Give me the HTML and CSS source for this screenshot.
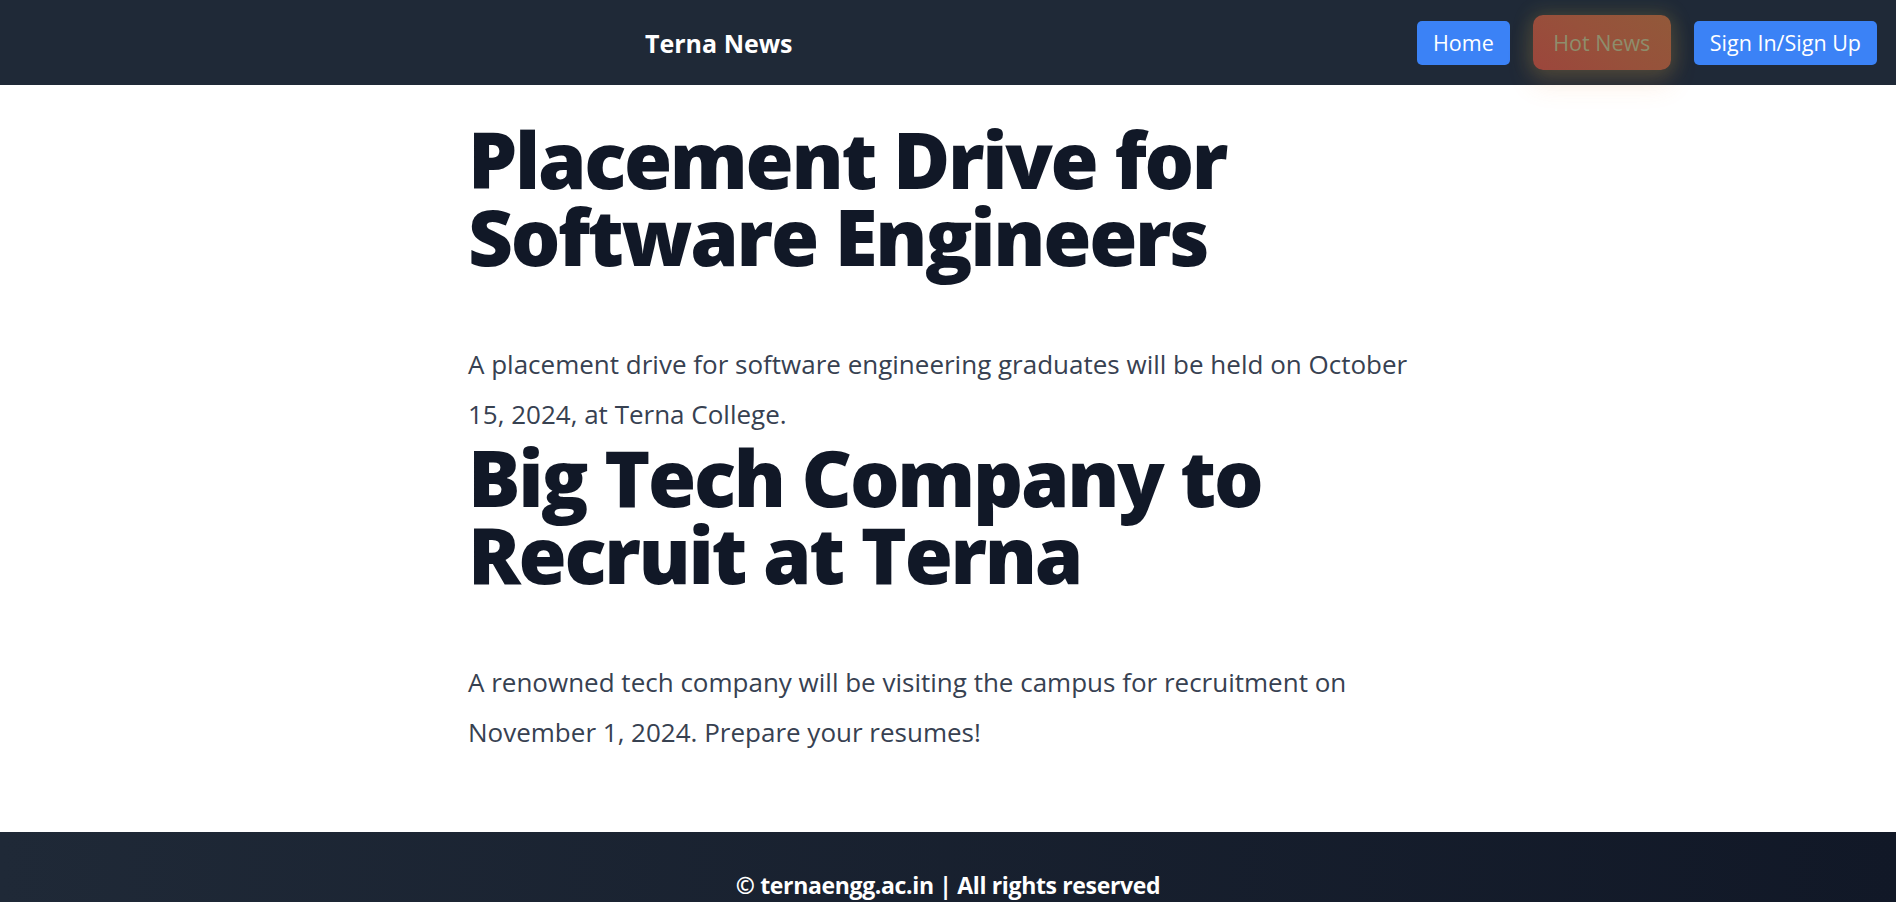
FILE: index.html
```html
<!DOCTYPE html>
<html lang="en">
<head>
<meta charset="utf-8">
<title>Terna News</title>
<link rel="stylesheet" href="styles.css">
</head>
<body>
<header class="site-header">
  <div class="logo">Terna News</div>
  <nav class="nav">
    <a class="btn btn-blue" href="#">Home</a>
    <a class="btn btn-hot" href="#">Hot News</a>
    <a class="btn btn-blue" href="#">Sign In/Sign Up</a>
  </nav>
</header>
<main class="content">
  <article class="news">
    <h1 class="news-title">Placement Drive for Software Engineers</h1>
    <p class="news-text">A placement drive for software engineering graduates will be held on October 15, 2024, at Terna College.</p>
  </article>
  <article class="news">
    <h1 class="news-title">Big Tech Company to Recruit at Terna</h1>
    <p class="news-text">A renowned tech company will be visiting the campus for recruitment on November 1, 2024. Prepare your resumes!</p>
  </article>
</main>
<footer class="site-footer">
  <p class="footer-text">© ternaengg.ac.in | All rights reserved</p>
</footer>
</body>
</html>
```

FILE: styles.css
```css
* { box-sizing: border-box; }
html, body { margin: 0; padding: 0; }
body {
  font-family: "Open Sans", "Noto Sans", sans-serif;
  background: #ffffff;
  color: #111827;
}
.site-header {
  height: 85px;
  background: #1f2937;
  display: flex;
  align-items: center;
  padding-right: 19px;
  position: relative;
  z-index: 1;
}
.logo {
  margin-left: 645px;
  color: #ffffff;
  font-weight: 700;
  font-size: 25px;
  letter-spacing: 0;
}
.nav {
  margin-left: auto;
  display: flex;
  align-items: center;
  gap: 34px;
}
.btn {
  display: flex;
  align-items: center;
  justify-content: center;
  height: 44px;
  padding: 0 16px;
  border-radius: 5px;
  font-size: 21.5px;
  letter-spacing: 0;
  color: #ffffff;
  text-decoration: none;
  white-space: nowrap;
}
.btn-blue { background: #3b82f6; }
.btn-hot {
  height: 55px;
  width: 138px;
  margin: 0 -11px;
  border-radius: 10px;
  background: linear-gradient(35deg, #9c463c 0%, #97513b 50%, #92593a 100%);
  color: #8e8d6c;
  box-shadow: 0 0 18px 4px rgba(214, 190, 70, 0.16), 0 14px 26px 2px rgba(249, 140, 60, 0.12);
}
.content {
  width: 960px;
  margin: 0 auto;
  padding-top: 36px;
  padding-bottom: 75px;
}
.news-title {
  margin: 0;
  font-size: 78px;
  line-height: 77.4px;
  font-weight: 800;
  letter-spacing: -2.3px;
  color: #111827;
}
.news-text {
  margin: 63px 0 0;
  font-size: 26px;
  line-height: 50px;
  letter-spacing: 0;
  color: #374151;
}
.site-footer {
  background: linear-gradient(to right, #1f2937, #111827);
  padding: 35px 0 35px;
  text-align: center;
}
.footer-text {
  margin: 0;
  color: #ffffff;
  font-weight: 700;
  font-size: 23px;
  line-height: 36px;
  letter-spacing: -0.35px;
}
```
